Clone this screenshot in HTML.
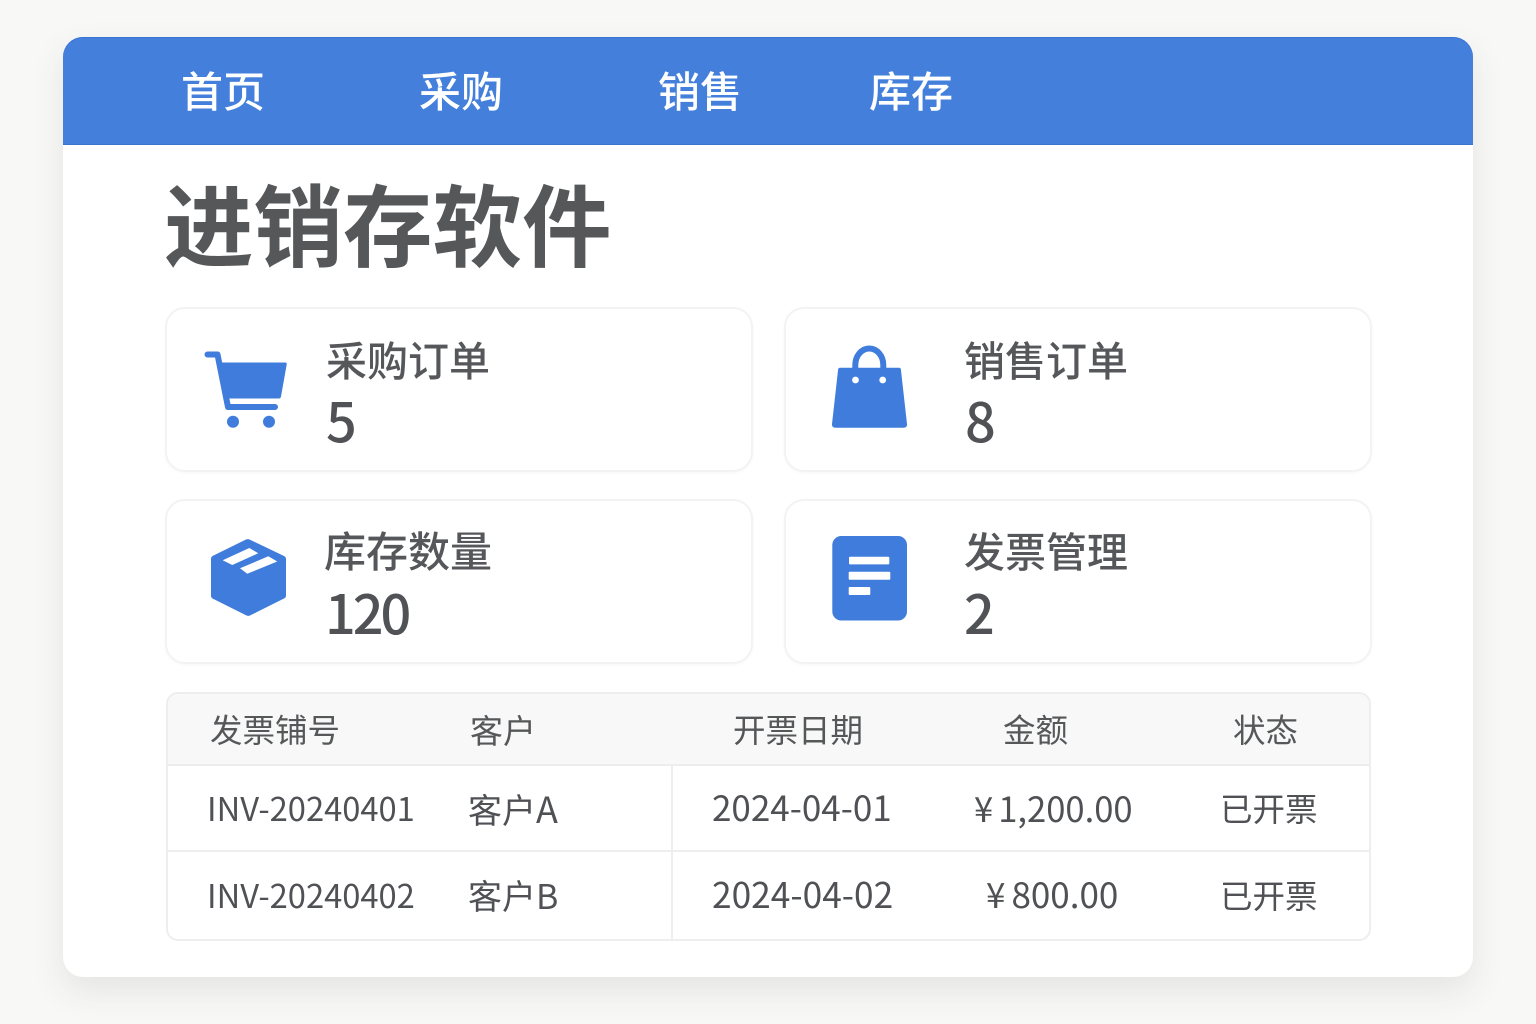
<!DOCTYPE html>
<html lang="zh-CN"><head><meta charset="utf-8"><title>进销存软件</title>
<style>
html,body{margin:0;padding:0;width:1536px;height:1024px;overflow:hidden;background:#f8f8f6}
body{position:relative;font-family:"Liberation Sans","Noto Sans CJK SC",sans-serif}
.n,.t,.v,.c,.h,.x{position:absolute;white-space:nowrap;font-family:"Noto Sans CJK SC",sans-serif}
.panel{position:absolute;left:63px;top:37px;width:1410px;height:940px;background:#fff;border-radius:20px;box-shadow:0 14px 34px rgba(60,60,60,.10)}
.bar{position:absolute;left:63px;top:37px;width:1410px;height:108px;background:#4480db;border-radius:20px 20px 0 0;box-shadow:inset 0 -1px 0 #3a74d2,inset 0 1px 0 #3a74d2}
.n{color:#fff;font-size:42px;font-weight:500;line-height:60px;top:60px}
.x{color:#555759;font-size:89.500px;font-weight:700;line-height:100px;left:164px;top:171px}
.card{position:absolute;width:588px;height:165px;background:#fff;border:2px solid #f3f3f1;border-radius:20px;box-sizing:border-box;box-shadow:0 1px 3px rgba(0,0,0,.03)}
.t{color:#55575a;font-size:41px;font-weight:500;line-height:56px}
.v{color:#505256;font-size:54px;font-weight:500;line-height:70px}
.tbl{position:absolute;left:166px;top:692px;width:1205px;height:249px;background:#fff;border:2px solid #eeeeee;border-radius:12px;box-sizing:border-box;overflow:hidden}
.thead{position:absolute;left:0;top:0;width:100%;height:70px;background:#f8f8f8;border-bottom:2px solid #ededed}
.l1{position:absolute;left:0;top:156px;width:100%;height:2px;background:#eeeeee}
.l2{position:absolute;left:503px;top:72px;width:2px;height:177px;background:#eeeeee}
.h{color:#555759;font-size:32.5px;line-height:44px;top:707px}
.c{color:#4f5155;font-size:33px;line-height:46px}
.d{font-size:35px}
svg{position:absolute;left:0;top:0}
</style></head><body>
<div class="panel"></div>
<div class="bar"></div>
<div class="n" style="left:181px">首页</div>
<div class="n" style="left:419px">采购</div>
<div class="n" style="left:658px">销售</div>
<div class="n" style="left:869px">库存</div>
<div class="x">进销存软件</div>

<div class="card" style="left:165px;top:307px"></div>
<div class="card" style="left:784px;top:307px"></div>
<div class="card" style="left:165px;top:499px"></div>
<div class="card" style="left:784px;top:499px"></div>

<svg width="1536" height="1024" viewBox="0 0 1536 1024">
<g fill="#3f7cdb">
<path d="M219 362.500H285.500Q287 362.500 286.700 364.500L281 396.500Q280.600 398.500 279 398.500H226.500Z"/>
<path d="M207.500 354.500H217.500L228 407H275" fill="none" stroke="#3f7cdb" stroke-width="6" stroke-linecap="round" stroke-linejoin="round"/>
<circle cx="233" cy="421.700" r="6"/><circle cx="269" cy="421.700" r="6"/>
<path d="M855.300 369V365A14 16.500 0 0 1 883.300 365V369" fill="none" stroke="#3f7cdb" stroke-width="6"/>
<path d="M840 367.700H899Q900.700 367.700 900.900 369.500L907 424Q907.300 427.800 903.500 427.800H835.500Q831.700 427.800 832 424L838.100 369.500Q838.300 367.700 840 367.700Z"/>
<path d="M246 539.500Q247.800 538.700 249.500 539.500L284 556Q286 557 286 559V595.500Q286 597.500 284 598.500L250 615.500Q248.300 616.300 246.500 615.500L213 598.800Q211 597.800 211 595.800V558.800Q211 556.800 213 555.800Z"/>
<rect x="832.300" y="536" width="74.700" height="84.500" rx="9"/>
</g>
<circle cx="855.500" cy="380" r="3.400" fill="#fff"/><circle cx="882.700" cy="380" r="3.400" fill="#fff"/>
<g fill="#fff">
<path d="M222.700 560.300L249.300 548L258.300 553.300L232.300 565Z"/>
<path d="M240 568.300L268.300 556.300L277.300 561.500L247.300 573.700Z"/>
<rect x="849" y="556.700" width="40.300" height="7.700" rx="1"/>
<rect x="848.700" y="571.700" width="41.600" height="8" rx="1"/>
<rect x="848.700" y="587" width="21.600" height="8" rx="1"/>
</g>
</svg>

<div class="t" style="left:326px;top:330px">采购订单</div>
<div class="v" style="left:326px;top:384px">5</div>
<div class="t" style="left:964px;top:330px">销售订单</div>
<div class="v" style="left:965px;top:384px">8</div>
<div class="t" style="left:324px;top:522px;font-size:42px">库存数量</div>
<div class="v" style="left:325px;top:576px;letter-spacing:-3px">120</div>
<div class="t" style="left:964px;top:521px">发票管理</div>
<div class="v" style="left:964px;top:576px">2</div>

<div class="tbl"><div class="thead"></div><div class="l1"></div><div class="l2"></div></div>
<div class="h" style="left:210px">发票铺号</div>
<div class="h" style="left:470px;font-size:33px">客户</div>
<div class="h" style="left:733px">开票日期</div>
<div class="h" style="left:1003px">金额</div>
<div class="h" style="left:1233px">状态</div>

<div class="c" style="left:207px;top:785px;font-size:32.700px">INV-20240401</div>
<div class="c" style="left:468px;top:785px;font-size:34px">客户<span style="font-size:36px">A</span></div>
<div class="c d" style="left:712px;top:784px">2024-04-01</div>
<div class="c d" style="left:974px;top:784px;font-size:34.600px"><span style="margin-right:5px">¥</span>1,200.00</div>
<div class="c" style="left:1220px;top:785px;font-size:32.500px">已开票</div>
<div class="c" style="left:207px;top:872px;font-size:32.700px">INV-20240402</div>
<div class="c" style="left:468px;top:872px;font-size:34px">客户B</div>
<div class="c d" style="left:712px;top:871px;font-size:35.300px">2024-04-02</div>
<div class="c d" style="left:986px;top:871px"><span style="margin-right:6px">¥</span>800.00</div>
<div class="c" style="left:1220px;top:872px;font-size:32.500px">已开票</div>
</body></html>
